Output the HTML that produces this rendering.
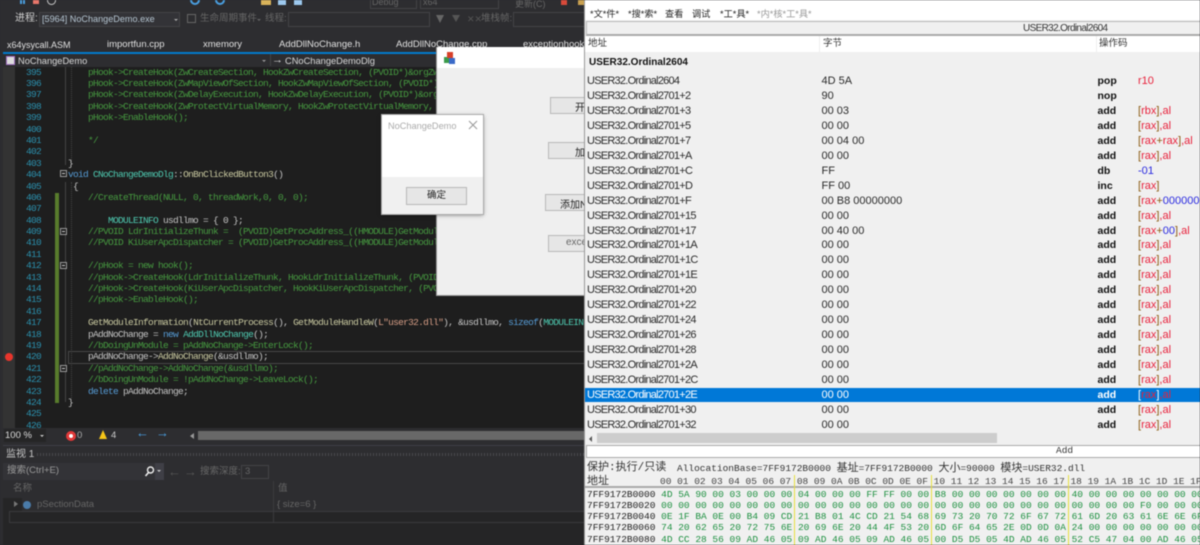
<!DOCTYPE html>
<html><head><meta charset="utf-8"><style>
html,body{margin:0;padding:0;background:#2d2d30}
body{width:1200px;height:545px;overflow:hidden;position:relative;font-family:"Liberation Sans","Noto Sans CJK SC",sans-serif}
#w{position:absolute;left:0;top:0;width:1200px;height:545px;overflow:hidden;filter:blur(.4px)}
.a{position:absolute;white-space:pre}
pre{margin:0;font-family:"Liberation Mono","Noto Sans CJK SC",monospace;font-size:9.5px;letter-spacing:-.7px;line-height:11.39px;position:absolute}
.c{color:#469a40}.n{color:#c4c4c4}.t{color:#4ec9b0}.k{color:#569cd6}.f{color:#c9c9a0}.s{color:#d69d85}
.b{position:absolute;box-sizing:border-box;background:#e6e6e6;border:1px solid #b8b8b8;font-size:10px;color:#222;white-space:nowrap;overflow:hidden}
.r{position:absolute;left:587px;width:613px;height:15px;margin-top:1px;font-size:11px;letter-spacing:-.75px;line-height:15px;color:#2a2a2a;white-space:pre}
.r i{position:absolute;left:234.5px;font-style:normal;font-size:11px;letter-spacing:0}
.r b{position:absolute;left:510.5px;color:#111;font-size:10.5px;letter-spacing:0}
.r u{position:absolute;left:551px;text-decoration:none;color:#e8203a;font-size:11px;letter-spacing:0}
.r u em{font-style:normal;color:#8a5a10}.r u s{text-decoration:none;color:#2a2ae0}
.h{position:absolute;left:587px;font-family:"Liberation Mono",monospace;font-size:9.5px;line-height:11px;white-space:pre;color:#1d9040}
.h span{color:#222}
</style></head><body><div id="w">

<!-- left chrome -->
<div class="a" style="left:0;top:0;width:585px;height:545px;background:#2d2d30"></div>
<div class="a" style="left:20px;top:0;width:2px;height:4px;background:#4a9fe0"></div>
<div class="a" style="left:23px;top:0;width:2px;height:4px;background:#4a9fe0"></div>
<div class="a" style="left:33px;top:0;width:6px;height:4px;background:#e8766a"></div>
<div class="a" style="left:47px;top:-4px;width:7px;height:7px;border:1.5px solid #ccc;border-radius:50%"></div>
<div class="a" style="left:190px;top:-5px;width:6px;height:6px;border:2px solid #4a9fe0;border-radius:50%"></div>
<div class="a" style="left:215px;top:-5px;width:6px;height:6px;border:2px solid #4a9fe0;border-radius:50%"></div>
<div class="a" style="left:261px;top:0;width:10px;height:5px;background:#d9b35a"></div>
<div class="a" style="left:278px;top:0;width:8px;height:5px;background:#9cc8ee"></div>
<div class="a" style="left:294px;top:0;width:8px;height:5px;background:#9cc8ee"></div>
<div class="a" style="left:370px;top:-1px;width:45px;height:8px;border:1px solid #434346"></div>
<div class="a" style="left:372px;top:-3px;font-size:9px;color:#666">Debug</div>
<div class="a" style="left:420px;top:-1px;width:77px;height:8px;border:1px solid #434346"></div>
<div class="a" style="left:423px;top:-3px;font-size:9px;color:#666">x64</div>
<div class="a" style="left:515px;top:-3px;font-size:9px;color:#666">更新(C)</div>
<div class="a" style="left:561px;top:0;width:6px;height:5px;background:#d84a3a"></div>
<div class="a" style="left:578px;top:0;width:7px;height:5px;background:#c9a050"></div>

<div class="a" style="left:15px;top:13px;font-size:10px;line-height:12px;color:#d0d0d0">进程:</div>
<div class="a" style="left:39px;top:12px;width:141px;height:15px;box-sizing:border-box;background:#333337;border:1px solid #434346"></div>
<div class="a" style="left:42px;top:13px;font-size:9.1px;line-height:12px;color:#b4c4d0">[5964] NoChangeDemo.exe</div>
<div class="a" style="left:174px;top:19px;border:2.5px solid transparent;border-top-color:#aaa"></div>
<div class="a" style="left:187px;top:14px;width:9px;height:9px;box-sizing:border-box;border:1px solid #666"></div>
<div class="a" style="left:200px;top:13px;font-size:9.5px;line-height:12px;color:#666">生命周期事件</div>
<div class="a" style="left:257px;top:19px;border:2.5px solid transparent;border-top-color:#666"></div>
<div class="a" style="left:265px;top:13px;font-size:9.5px;line-height:12px;color:#666">线程:</div>
<div class="a" style="left:288px;top:12px;width:142px;height:15px;box-sizing:border-box;border:1px solid #434346"></div>
<div class="a" style="left:436px;top:15px;border:4px solid transparent;border-top:8px solid #666"></div>
<div class="a" style="left:452px;top:15px;border:4px solid transparent;border-top:7px solid #555"></div>
<div class="a" style="left:467px;top:13px;font-size:9px;line-height:12px;color:#555">✕✕</div>
<div class="a" style="left:481px;top:13px;font-size:9.5px;line-height:12px;color:#666">堆栈帧:</div>
<div class="a" style="left:513px;top:12px;width:72px;height:15px;box-sizing:border-box;border:1px solid #434346"></div>

<!-- tabs -->
<div class="a" style="left:7px;top:39px;font-size:9px;line-height:12px;color:#e0e0e0">x64ysycall.ASM</div>
<div class="a" style="left:107px;top:39px;font-size:9.5px;line-height:12px;color:#e0e0e0">importfun.cpp</div>
<div class="a" style="left:203px;top:39px;font-size:9.5px;line-height:12px;color:#e0e0e0">xmemory</div>
<div class="a" style="left:279px;top:39px;font-size:9.5px;line-height:12px;color:#e0e0e0">AddDllNoChange.h</div>
<div class="a" style="left:396px;top:39px;font-size:9.5px;line-height:12px;color:#e0e0e0">AddDllNoChange.cpp</div>
<div class="a" style="left:523px;top:39px;font-size:9.5px;line-height:12px;color:#e0e0e0">exceptionhook</div>
<div class="a" style="left:3px;top:52px;width:582px;height:2px;background:#007acc"></div>

<!-- nav bar -->
<div class="a" style="left:3px;top:54px;width:582px;height:13px;background:#2d2d30"></div>
<div class="a" style="left:6px;top:56px;width:9px;height:9px;box-sizing:border-box;background:#ddd;border:1px solid #a070c0"></div>
<div class="a" style="left:18px;top:55px;font-size:9.3px;line-height:12px;color:#d8d8d8">NoChangeDemo</div>
<div class="a" style="left:262px;top:60px;border:2.5px solid transparent;border-top-color:#999"></div>
<div class="a" style="left:270px;top:54px;width:1px;height:12px;background:#434346"></div>
<div class="a" style="left:272px;top:54px;font-size:11px;line-height:12px;color:#ddd">→</div>
<div class="a" style="left:285px;top:55px;font-size:9.3px;line-height:12px;color:#d8d8d8">CNoChangeDemoDlg</div>

<!-- editor -->
<div class="a" style="left:3px;top:67px;width:582px;height:362px;background:#1e1e1e;overflow:hidden"></div>
<div class="a" style="left:3px;top:67px;width:12px;height:362px;background:#333"></div>
<div class="a" style="left:55px;top:193px;width:4px;height:210px;background:#587c2c"></div>
<div class="a" style="left:65px;top:67px;width:1px;height:98px;background:#444"></div>
<div class="a" style="left:65px;top:182px;width:1px;height:220px;background:#444"></div>
<div class="a" style="left:71px;top:67px;width:0;height:95px;border-left:1px dotted #444"></div>
<div class="a" style="left:71px;top:182px;width:0;height:216px;border-left:1px dotted #444"></div>
<div class="a" style="left:68px;top:351px;width:517px;height:11px;border:1px solid #484848;border-right:0"></div>
<div class="a" style="left:5px;top:353px;width:8px;height:8px;border-radius:50%;background:#e8352c"></div>

<pre class="k" style="left:26px;top:66.6px;height:362px;overflow:hidden;color:#2b91af">395
396
397
398
399
400
401
402
403
404
405
406
407
408
409
410
411
412
413
414
415
416
417
418
419
420
421
422
423
424
425
426</pre>

<pre class="n" style="left:68px;top:66.6px;width:517px;height:362px;overflow:hidden">    <span class="c">pHook-&gt;CreateHook(ZwCreateSection, HookZwCreateSection, (PVOID*)&amp;orgZwCreateSection);</span>
    <span class="c">pHook-&gt;CreateHook(ZwMapViewOfSection, HookZwMapViewOfSection, (PVOID*)&amp;orgZwMapViewOfSection);</span>
    <span class="c">pHook-&gt;CreateHook(ZwDelayExecution, HookZwDelayExecution, (PVOID*)&amp;orgZwDelayExecution);</span>
    <span class="c">pHook-&gt;CreateHook(ZwProtectVirtualMemory, HookZwProtectVirtualMemory, (PVOID*)&amp;org);</span>
    <span class="c">pHook-&gt;EnableHook();</span>

    <span class="c">*/</span>

}
<span class="k">void</span> <span class="t">CNoChangeDemoDlg</span>::<span class="f">OnBnClickedButton3</span>()
 {
    <span class="c">//CreateThread(NULL, 0, threadWork,0, 0, 0);</span>

        <span class="t">MODULEINFO</span> usdllmo = { 0 };
    <span class="c">//PVOID LdrInitializeThunk =  (PVOID)GetProcAddress_((HMODULE)GetModuleHandleW(L"ntdll"));</span>
    <span class="c">//PVOID KiUserApcDispatcher = (PVOID)GetProcAddress_((HMODULE)GetModuleHandleW(L"ntdll"));</span>

    <span class="c">//pHook = new hook();</span>
    <span class="c">//pHook-&gt;CreateHook(LdrInitializeThunk, HookLdrInitializeThunk, (PVOID*)&amp;org);</span>
    <span class="c">//pHook-&gt;CreateHook(KiUserApcDispatcher, HookKiUserApcDispatcher, (PVOID*)&amp;org);</span>
    <span class="c">//pHook-&gt;EnableHook();</span>

    <span class="f">GetModuleInformation</span>(<span class="f">NtCurrentProcess</span>(), <span class="f">GetModuleHandleW</span>(<span class="s">L"user32.dll"</span>), &amp;usdllmo, <span class="k">sizeof</span>(<span class="t">MODULEINFO</span>));
    pAddNoChange = <span class="k">new</span> <span class="t">AddDllNoChange</span>();
    <span class="c">//bDoingUnModule = pAddNoChange-&gt;EnterLock();</span>
    pAddNoChange-&gt;<span class="f">AddNoChange</span>(&amp;usdllmo);
    <span class="c">//pAddNoChange-&gt;AddNoChange(&amp;usdllmo);</span>
    <span class="c">//bDoingUnModule = !pAddNoChange-&gt;LeaveLock();</span>
    <span class="k">delete</span> pAddNoChange;
}</pre>

<div class="a" style="left:60px;top:170px;width:7px;height:7px;box-sizing:border-box;border:1px solid #999;background:#1e1e1e"></div>
<div class="a" style="left:62px;top:173px;width:3px;height:1px;background:#ccc"></div>
<div class="a" style="left:60px;top:228px;width:7px;height:7px;box-sizing:border-box;border:1px solid #999;background:#1e1e1e"></div>
<div class="a" style="left:62px;top:231px;width:3px;height:1px;background:#ccc"></div>
<div class="a" style="left:60px;top:262px;width:7px;height:7px;box-sizing:border-box;border:1px solid #999;background:#1e1e1e"></div>
<div class="a" style="left:62px;top:265px;width:3px;height:1px;background:#ccc"></div>
<div class="a" style="left:60px;top:365px;width:7px;height:7px;box-sizing:border-box;border:1px solid #999;background:#1e1e1e"></div>
<div class="a" style="left:62px;top:368px;width:3px;height:1px;background:#ccc"></div>

<!-- status strip -->
<div class="a" style="left:3px;top:428px;width:582px;height:15px;background:#2d2d30"></div>
<div class="a" style="left:4px;top:429px;width:42px;height:13px;background:#252526"></div>
<div class="a" style="left:5px;top:430px;font-size:9.5px;line-height:12px;color:#ddd">100 %</div>
<div class="a" style="left:40px;top:435px;border:2.5px solid transparent;border-top-color:#ccc"></div>
<div class="a" style="left:66px;top:431px;width:8px;height:8px;border-radius:50%;background:#fff;border:1px solid #e03030;box-shadow:inset 0 0 0 2px #e03030"></div>
<div class="a" style="left:77px;top:430px;font-size:9.5px;line-height:12px;color:#aaa">0</div>
<div class="a" style="left:99px;top:430px;border:4.5px solid transparent;border-bottom:9px solid #f5c518;border-top:0"></div>
<div class="a" style="left:111px;top:430px;font-size:9.5px;line-height:12px;color:#ccc">4</div>
<div class="a" style="left:136px;top:426px;font-size:13px;line-height:13px;color:#4a9fe0">←</div>
<div class="a" style="left:156px;top:426px;font-size:13px;line-height:13px;color:#4a9fe0">→</div>
<div class="a" style="left:190px;top:433px;border:3px solid transparent;border-right:4px solid #999;border-left:0"></div>
<div class="a" style="left:198px;top:431px;width:387px;height:9px;background:#686868"></div>

<!-- watch panel -->
<div class="a" style="left:3px;top:445px;width:582px;height:1px;background:#3f3f46"></div>
<div class="a" style="left:6px;top:449px;font-size:10px;line-height:12px;color:#c8c8c8">监视 1</div>
<div class="a" style="left:37px;top:453px;width:548px;height:3px;background:repeating-linear-gradient(90deg,#4a4a4e 0 1px,transparent 1px 3px)"></div>
<div class="a" style="left:3px;top:463px;width:161px;height:17px;background:#333337"></div>
<div class="a" style="left:155px;top:463px;width:9px;height:17px;background:#3f3f46"></div>
<div class="a" style="left:7px;top:465px;font-size:9.5px;line-height:12px;color:#999">搜索(Ctrl+E)</div>
<svg class="a" style="left:144px;top:466px" width="11" height="11"><circle cx="6.5" cy="4" r="3" fill="none" stroke="#eee" stroke-width="1.4"/><path d="M4.5 6.5L1.5 10" stroke="#eee" stroke-width="1.6"/></svg>
<div class="a" style="left:157px;top:470px;border:2.5px solid transparent;border-top-color:#ccc"></div>
<div class="a" style="left:168px;top:465px;font-size:13px;line-height:13px;color:#555">←</div>
<div class="a" style="left:184px;top:465px;font-size:13px;line-height:13px;color:#555">→</div>
<div class="a" style="left:200px;top:466px;font-size:9.5px;line-height:12px;color:#666">搜索深度:</div>
<div class="a" style="left:241px;top:465px;width:28px;height:14px;box-sizing:border-box;border:1px solid #434346"></div>
<div class="a" style="left:245px;top:466px;font-size:9.5px;line-height:12px;color:#666">3</div>
<div class="a" style="left:3px;top:481px;width:582px;height:64px;background:#252526"></div>
<div class="a" style="left:3px;top:481px;width:582px;height:17px;background:#2d2d30"></div>
<div class="a" style="left:13px;top:483px;font-size:9.5px;line-height:12px;color:#666">名称</div>
<div class="a" style="left:278px;top:483px;font-size:9.5px;line-height:12px;color:#666">值</div>
<div class="a" style="left:22px;top:498px;width:563px;height:13px;background:#2d2d30"></div>
<div class="a" style="left:14px;top:501px;border:3px solid transparent;border-left:4px solid #777;border-right:0"></div>
<div class="a" style="left:23px;top:501px;width:8px;height:8px;border-radius:50%;background:#4a7ba8"></div>
<div class="a" style="left:37px;top:498px;font-size:9.5px;line-height:13px;color:#666">pSectionData</div>
<div class="a" style="left:277px;top:498px;font-size:9.5px;line-height:13px;color:#666">{ size=6 }</div>
<div class="a" style="left:9px;top:511px;width:576px;height:1px;background:#3a3a3d"></div>
<div class="a" style="left:9px;top:522px;width:576px;height:1px;background:#3a3a3d"></div>
<div class="a" style="left:9px;top:511px;width:1px;height:12px;background:#3a3a3d"></div>
<div class="a" style="left:273px;top:481px;width:1px;height:42px;background:#3a3a3d"></div>

<!-- main app dialog -->
<div class="a" style="left:436px;top:47px;width:155px;height:249px;box-sizing:border-box;background:#efefef;border-bottom:1px solid #999;border-left:1px solid #999"></div>
<div class="a" style="left:437px;top:47px;width:154px;height:21px;background:#fff"></div>
<div class="a" style="left:444px;top:57px;width:6px;height:6px;background:#3a9a4a"></div>
<div class="a" style="left:447px;top:52px;width:6px;height:6px;background:#d8402a"></div>
<div class="a" style="left:449px;top:58px;width:6px;height:6px;background:#3a6ac8"></div>
<div class="b" style="left:550px;top:97px;width:45px;height:17px;padding:1px 0 0 24px">开始</div>
<div class="b" style="left:548px;top:142px;width:47px;height:17px;padding:1px 0 0 26px">加载</div>
<div class="b" style="left:545px;top:194px;width:60px;height:17px;padding:1px 0 0 14px">添加NoChange</div>
<div class="b" style="left:548px;top:235px;width:50px;height:17px;padding:1px 0 0 17px;color:#666">exception</div>

<!-- message box -->
<div class="a" style="left:382px;top:115px;width:101px;height:99px;background:#f0f0f0;box-shadow:0 1px 4px rgba(0,0,0,.5);outline:1px solid #aaa"></div>
<div class="a" style="left:382px;top:115px;width:101px;height:62px;background:#fff"></div>
<div class="a" style="left:388px;top:120px;font-size:9.2px;line-height:12px;color:#aaa">NoChangeDemo</div>
<svg class="a" style="left:468px;top:120px" width="10" height="10"><path d="M1 1L9 9M9 1L1 9" stroke="#999" stroke-width="1" fill="none"/></svg>
<div class="b" style="left:406px;top:187px;width:61px;height:18px;text-align:center;line-height:16px;font-size:9.5px">确定</div>

<!-- right panel -->
<div class="a" style="left:585px;top:0;width:615px;height:545px;background:#f0f0f0;box-shadow:-1px 0 0 #999"></div>
<div class="a" style="left:585px;top:0;width:615px;height:20px;background:#fff"></div>
<div class="a" style="left:590px;top:8px;font-size:9.2px;line-height:12px;color:#222">*文*件*</div>
<div class="a" style="left:628px;top:8px;font-size:9.2px;line-height:12px;color:#222">*搜*索*</div>
<div class="a" style="left:665px;top:8px;font-size:9.2px;line-height:12px;color:#222">查看</div>
<div class="a" style="left:692px;top:8px;font-size:9.2px;line-height:12px;color:#222">调试</div>
<div class="a" style="left:720px;top:8px;font-size:9.2px;line-height:12px;color:#222">*工*具*</div>
<div class="a" style="left:757px;top:8px;font-size:9.2px;line-height:12px;color:#999">*内*核*工*具*</div>
<div class="a" style="left:586px;top:21px;width:614px;height:15px;box-sizing:border-box;background:#f0f0f0;border:1px solid #b8b8b8;border-bottom:2px solid #aaa;border-right:0"></div>
<div class="a" style="left:1023px;top:22px;font-size:10px;letter-spacing:-.65px;line-height:13px;color:#333">USER32.Ordinal2604</div>
<div class="a" style="left:585px;top:36px;width:615px;height:16px;background:#fff"></div>
<div class="a" style="left:819px;top:36px;width:1px;height:16px;background:#eee"></div>
<div class="a" style="left:1096px;top:36px;width:1px;height:16px;background:#eee"></div>
<div class="a" style="left:588px;top:38px;font-size:9.5px;line-height:12px;color:#333">地址</div>
<div class="a" style="left:823px;top:38px;font-size:9.5px;line-height:12px;color:#333">字节</div>
<div class="a" style="left:1099px;top:38px;font-size:9.5px;line-height:12px;color:#333">操作码</div>
<div class="a" style="left:589px;top:56px;font-size:10px;line-height:13px;font-weight:bold;color:#111">USER32.Ordinal2604</div>

<div class="r" style="top:73px">USER32.Ordinal2604<i>4D 5A</i><b>pop</b><u>r10</u></div>
<div class="r" style="top:88px">USER32.Ordinal2701+2<i>90</i><b>nop</b></div>
<div class="r" style="top:103px">USER32.Ordinal2701+3<i>00 03</i><b>add</b><u><em>[</em>rbx<em>]</em>,al</u></div>
<div class="r" style="top:118px">USER32.Ordinal2701+5<i>00 00</i><b>add</b><u><em>[</em>rax<em>]</em>,al</u></div>
<div class="r" style="top:133px">USER32.Ordinal2701+7<i>00 04 00</i><b>add</b><u><em>[</em>rax<em>+</em>rax<em>]</em>,al</u></div>
<div class="r" style="top:148px">USER32.Ordinal2701+A<i>00 00</i><b>add</b><u><em>[</em>rax<em>]</em>,al</u></div>
<div class="r" style="top:163px">USER32.Ordinal2701+C<i>FF</i><b>db</b><u><s>-01</s></u></div>
<div class="r" style="top:178px">USER32.Ordinal2701+D<i>FF 00</i><b>inc</b><u><em>[</em>rax<em>]</em></u></div>
<div class="r" style="top:193px">USER32.Ordinal2701+F<i>00 B8 00000000</i><b>add</b><u><em>[</em>rax<em>+</em><s>00000000</s></u></div>
<div class="r" style="top:208px">USER32.Ordinal2701+15<i>00 00</i><b>add</b><u><em>[</em>rax<em>]</em>,al</u></div>
<div class="r" style="top:223px">USER32.Ordinal2701+17<i>00 40 00</i><b>add</b><u><em>[</em>rax<em>+</em><s>00</s><em>]</em>,al</u></div>
<div class="r" style="top:237px">USER32.Ordinal2701+1A<i>00 00</i><b>add</b><u><em>[</em>rax<em>]</em>,al</u></div>
<div class="r" style="top:252px">USER32.Ordinal2701+1C<i>00 00</i><b>add</b><u><em>[</em>rax<em>]</em>,al</u></div>
<div class="r" style="top:267px">USER32.Ordinal2701+1E<i>00 00</i><b>add</b><u><em>[</em>rax<em>]</em>,al</u></div>
<div class="r" style="top:282px">USER32.Ordinal2701+20<i>00 00</i><b>add</b><u><em>[</em>rax<em>]</em>,al</u></div>
<div class="r" style="top:297px">USER32.Ordinal2701+22<i>00 00</i><b>add</b><u><em>[</em>rax<em>]</em>,al</u></div>
<div class="r" style="top:312px">USER32.Ordinal2701+24<i>00 00</i><b>add</b><u><em>[</em>rax<em>]</em>,al</u></div>
<div class="r" style="top:327px">USER32.Ordinal2701+26<i>00 00</i><b>add</b><u><em>[</em>rax<em>]</em>,al</u></div>
<div class="r" style="top:342px">USER32.Ordinal2701+28<i>00 00</i><b>add</b><u><em>[</em>rax<em>]</em>,al</u></div>
<div class="r" style="top:357px">USER32.Ordinal2701+2A<i>00 00</i><b>add</b><u><em>[</em>rax<em>]</em>,al</u></div>
<div class="r" style="top:372px">USER32.Ordinal2701+2C<i>00 00</i><b>add</b><u><em>[</em>rax<em>]</em>,al</u></div>
<div class="a" style="left:585px;top:388px;width:615px;height:14px;background:#0078d7"></div>
<div class="r" style="top:387px;color:#fff">USER32.Ordinal2701+2E<i>00 00</i><b style="color:#fff">add</b><u><em style="color:#fff">[</em>rax<em style="color:#fff">]</em>,al</u></div>
<div class="r" style="top:402px">USER32.Ordinal2701+30<i>00 00</i><b>add</b><u><em>[</em>rax<em>]</em>,al</u></div>
<div class="r" style="top:417px">USER32.Ordinal2701+32<i>00 00</i><b>add</b><u><em>[</em>rax<em>]</em>,al</u></div>

<!-- scrollbar / add bar -->
<div class="a" style="left:585px;top:432px;width:615px;height:12px;background:#f0f0f0"></div>
<div class="a" style="left:589px;top:436px;border:3px solid transparent;border-right:3px solid #555;border-left:0"></div>
<div class="a" style="left:597px;top:433px;width:400px;height:10px;background:#cdcdcd"></div>
<div class="a" style="left:586px;top:445px;width:614px;height:13px;box-sizing:border-box;background:#fff;border:1px solid #aaa;border-right:0"></div>
<div class="a" style="left:1056px;top:445px;font-family:'Liberation Mono',monospace;font-size:9.5px;line-height:12px;color:#333">Add</div>

<!-- hex -->
<div class="a" style="left:587px;top:462px;font-family:'Liberation Mono','Noto Sans CJK SC',monospace;font-size:11px;line-height:13px;color:#333">保护:执行/只读</div>
<div class="a" style="left:677px;top:463px;font-family:'Liberation Mono','Noto Sans CJK SC',monospace;font-size:9.5px;line-height:12px;color:#333">AllocationBase=7FF9172B0000 <span style="font-size:11px">基址</span>=7FF9172B0000 <span style="font-size:11px">大小</span>=90000 <span style="font-size:11px">模块</span>=USER32.dll</div>
<div class="a" style="left:587px;top:474px;font-size:11px;line-height:13px;color:#333;font-family:'Noto Sans CJK SC',sans-serif">地址</div>
<div class="h" style="top:476px;left:660px;color:#444">00 01 02 03 04 05 06 07 08 09 0A 0B 0C 0D 0E 0F 10 11 12 13 14 15 16 17 18 19 1A 1B 1C 1D 1E 1F</div>
<div class="a" style="left:585px;top:486px;width:615px;height:2px;background:#aaa"></div>
<div class="h" style="top:489px"><span>7FF9172B0000</span> 4D 5A 90 00 03 00 00 00 04 00 00 00 FF FF 00 00 B8 00 00 00 00 00 00 00 40 00 00 00 00 00 00 00</div>
<div class="h" style="top:500px"><span>7FF9172B0020</span> 00 00 00 00 00 00 00 00 00 00 00 00 00 00 00 00 00 00 00 00 00 00 00 00 00 00 00 00 F0 00 00 00</div>
<div class="h" style="top:511px"><span>7FF9172B0040</span> 0E 1F BA 0E 00 B4 09 CD 21 B8 01 4C CD 21 54 68 69 73 20 70 72 6F 67 72 61 6D 20 63 61 6E 6E 6F</div>
<div class="h" style="top:522px"><span>7FF9172B0060</span> 74 20 62 65 20 72 75 6E 20 69 6E 20 44 4F 53 20 6D 6F 64 65 2E 0D 0D 0A 24 00 00 00 00 00 00 00</div>
<div class="h" style="top:534px"><span>7FF9172B0080</span> 4D CC 28 56 09 AD 46 05 09 AD 46 05 09 AD 46 05 00 D5 D5 05 4D AD 46 05 52 C5 47 04 00 AD 46 05</div>
<div class="a" style="left:794px;top:475px;width:1px;height:70px;background:#e8e040"></div>
<div class="a" style="left:931px;top:475px;width:1px;height:70px;background:#e8e040"></div>
<div class="a" style="left:1068px;top:475px;width:1px;height:70px;background:#e8e040"></div>
</div></body></html>
